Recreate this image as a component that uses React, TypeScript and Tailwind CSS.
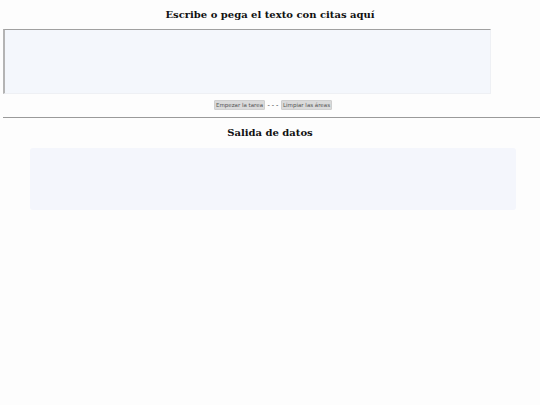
export default function App() {
  return (
    <div className="min-h-[405px] w-full bg-[#fdfdfd] font-['DejaVu_Serif',serif] text-[#111]">
      {/* Entrada */}
      <h1 className="pt-[7px] text-center text-[10px] font-bold leading-[16px]">
        Escribe o pega el texto con citas aquí
      </h1>
      <div className="mt-[6px] pl-[3px]">
        <textarea
          className="block h-[65px] w-[488px] resize-none border-t border-l-2 border-r border-b border-t-[#a0a0a0] border-l-[#b4b4b4] border-r-[#eef0f4] border-b-[#eef0f4] bg-[#f4f7fc] outline-none"
        />
      </div>

      {/* Botones */}
      <div className="mt-[6px] flex items-center justify-center gap-[2px] pl-[6px] font-['DejaVu_Sans',sans-serif] text-[5.5px] text-[#555]">
        <button className="h-[10px] w-[51px] rounded-[1px] border border-[#cfcfcf] bg-[#dadada] leading-[8px]">
          Empezar la tarea
        </button>
        <span className="w-[12px] text-center font-['Liberation_Sans',sans-serif] text-[7px] leading-[10px] text-[#444]">- - -</span>
        <button className="h-[10px] w-[51px] rounded-[1px] border border-[#cfcfcf] bg-[#dadada] leading-[8px]">
          Limpiar las áreas
        </button>
      </div>

      <hr className="mt-[7px] ml-[3px] border-t border-[#9a9a9a]" />

      {/* Salida */}
      <h2 className="mt-[7px] text-center text-[10px] font-bold leading-[16px]">Salida de datos</h2>
      <div className="mt-[7px] ml-[30px] h-[62px] w-[486px] rounded-[3px] bg-[#f4f6fc]" />
    </div>
  );
}
